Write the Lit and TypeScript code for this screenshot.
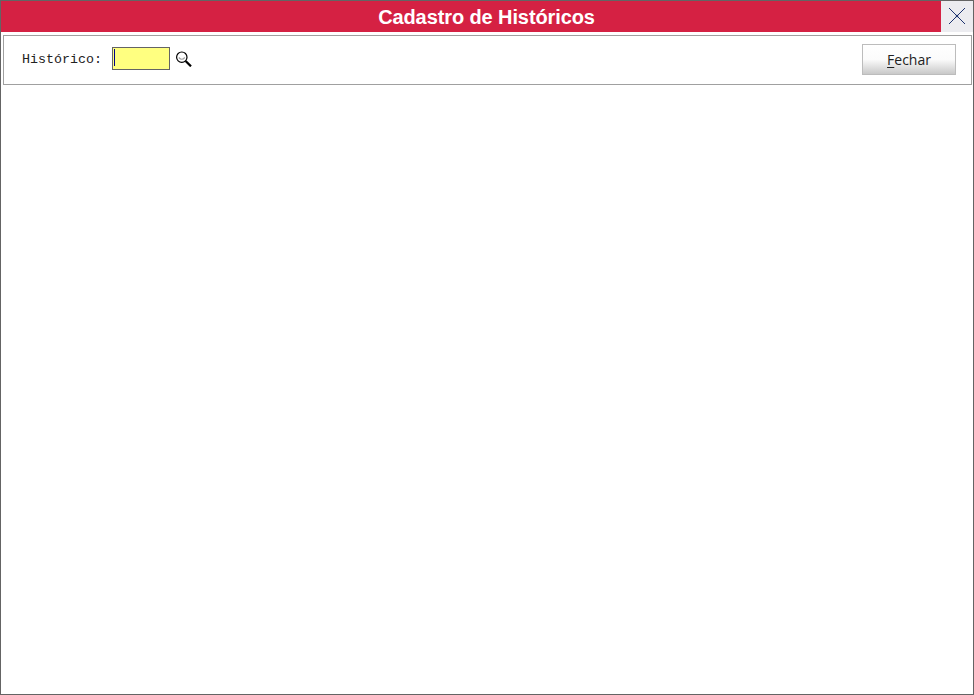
import { LitElement, html, css } from "lit";
import { customElement } from "lit/decorators.js";

@customElement("app-root")
export class AppRoot extends LitElement {
  static styles = css`
    :host {
      display: block;
      width: 974px;
      height: 695px;
      box-sizing: border-box;
      border: 1px solid #646464;
      background: #fff;
      overflow: hidden;
    }
    .title-row {
      display: flex;
      height: 31px;
    }
    .title {
      flex: 1;
      background: #d52143;
      color: #fff;
      font: bold 20px/32px "Liberation Sans", Arial, sans-serif;
      letter-spacing: -0.1px;
      text-align: center;
      padding-left: 31px;
    }
    .close {
      width: 32px;
      background: #ececf0;
      display: flex;
      align-items: center;
      justify-content: center;
    }
    .close svg {
      display: block;
      margin-bottom: 1px;
    }
    .panel {
      margin: 3px 1px 0 2px;
      height: 50px;
      box-sizing: border-box;
      border: 1px solid #a0a0a0;
      display: flex;
      align-items: center;
      padding: 0 15px 1px 18px;
    }
    .label {
      font: 13.33px "Liberation Mono", "Courier New", monospace;
      color: #222;
      margin-right: 10px;
      white-space: pre;
    }
    .field {
      width: 58px;
      height: 23px;
      box-sizing: border-box;
      border: 1px solid #646464;
      background: #ffff80;
      padding: 1px 0 0 1px;
      margin-bottom: 2px;
    }
    .caret {
      width: 1px;
      height: 17px;
      background: #00008b;
    }
    .search {
      margin-left: 6px;
      margin-bottom: 1px;
      display: block;
    }
    .spacer {
      flex: 1;
    }
    .btn {
      width: 94px;
      height: 31px;
      box-sizing: border-box;
      border: 1px solid #bcbcbc;
      background: linear-gradient(#ffffff 0%, #fbfbfb 50%, #c8c8c8 100%);
      font: 14px/29px "Open Sans", "Noto Sans", sans-serif;
      color: #222;
      text-align: center;
    }
    .btn u {
      text-underline-offset: 2px;
    }
  `;

  render() {
    return html`
      <div class="title-row">
        <div class="title">Cadastro de Históricos</div>
        <div class="close">
          <svg width="18" height="18" viewBox="0 0 18 18">
            <path d="M1 1 L17 17 M17 1 L1 17" stroke="#1e3470" stroke-width="1" fill="none" />
            <circle cx="9" cy="9" r="1.3" fill="#1e3470" />
          </svg>
        </div>
      </div>
      <div class="panel">
        <span class="label">Histórico:</span>
        <div class="field"><div class="caret"></div></div>
        <svg class="search" width="16" height="16" viewBox="0 0 16 16">
          <circle cx="5.8" cy="6.2" r="5.2" fill="#fff" stroke="#000" stroke-width="1.2" />
          <path d="M2.8 6.5 Q5.8 10 8.8 6.5" stroke="#a0a0a0" stroke-width="1.2" fill="none" />
          <path d="M9.6 10 L15 15.4" stroke="#000" stroke-width="2.2" />
        </svg>
        <div class="spacer"></div>
        <div class="btn"><u>F</u>echar</div>
      </div>
    `;
  }
}
